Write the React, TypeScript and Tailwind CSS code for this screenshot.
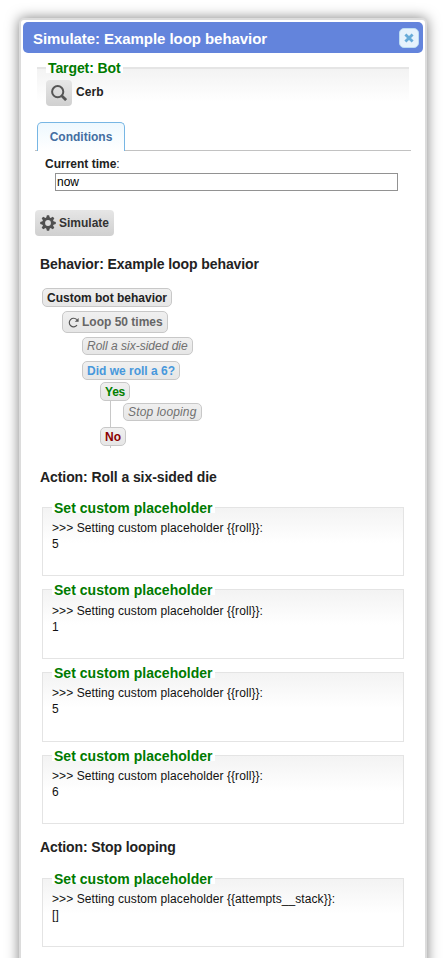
import React from "react";

type NodeProps = { className: string; children: React.ReactNode };

function TreeNode({ className, children }: NodeProps) {
  return (
    <div
      className={`flex w-fit items-center whitespace-nowrap rounded-[5px] border border-[#c8c8c8] bg-linear-to-b from-[#f0f0f0] to-[#e6e6e6] px-1 text-[12px] ${className}`}
    >
      {children}
    </div>
  );
}

type ResultProps = { className?: string; name: string; value: string };

function Result({ className = "", name, value }: ResultProps) {
  return (
    <section
      className={`ml-[21px] w-[362px] shrink-0 border border-[#e4e4e4] bg-linear-to-b from-[#f3f3f3] to-white to-[35px] pl-[9px] ${className}`}
    >
      <h3 className="-mt-[10px] flex h-[20px] w-[163px] items-center whitespace-nowrap bg-linear-to-b from-white from-75% to-transparent to-75% pl-[2px] text-[14px] font-bold tracking-[0.03px] text-[#007a00]">
        Set custom placeholder
      </h3>
      <p className="mt-[2px] whitespace-nowrap text-[12px] leading-[16px] tracking-[0.08px] text-[#111]">
        &gt;&gt;&gt; Setting custom placeholder {name}:
        <br />
        {value}
      </p>
    </section>
  );
}

function GearIcon() {
  return (
    <svg width="16" height="16" viewBox="0 0 16 16" className="shrink-0">
      <g fill="#505050">
        {[0, 45, 90, 135].map((a) => (
          <path key={a} d="M6.9.2h2.2l.9 3.3v9l-.9 3.3H6.9L6 12.5v-9z" transform={`rotate(${a} 8 8)`} />
        ))}
        <circle cx="8" cy="8" r="5.7" />
      </g>
      <circle cx="8" cy="8" r="2.9" fill="#dedede" />
    </svg>
  );
}

export default function App() {
  return (
    <div className="h-[958px] w-[444px] overflow-hidden bg-white pl-[19px] pt-[18px] font-['Liberation_Sans',Arial,sans-serif] text-[#222]">
      <main className="flex h-[980px] w-[408px] flex-col rounded-[5px] border-2 border-[#dcdcdc] bg-white shadow-[0_0_13px_rgba(0,0,0,0.5)]">
        <header className="mx-[2px] mt-[2px] flex h-[31px] shrink-0 items-center justify-between rounded-[5px] bg-[#6384dc] pl-[10px] pr-[4px]">
          <h1 className="mt-[3px] whitespace-nowrap text-[15px] font-bold tracking-[-0.06px] text-white">
            Simulate: Example loop behavior
          </h1>
          <button className="mt-px flex size-5 items-center justify-center rounded-[5px] border border-[#bcdcf2] bg-[#e6f2fc]">
            <svg width="10" height="10" viewBox="0 0 10 10">
              <path d="M1.4 1.4l7.2 7.2M8.6 1.4L1.4 8.6" stroke="#68abd8" strokeWidth="2.8" />
            </svg>
          </button>
        </header>

        <section className="ml-[16px] mt-[14px] h-[35px] w-[372px] shrink-0 border-t-2 border-[#e5e5e5] bg-linear-to-b from-[#f3f3f3] to-white pl-[9px]">
          <h2 className="-mt-[11px] flex h-[20px] w-[77px] items-center whitespace-nowrap bg-linear-to-b from-white from-75% to-transparent to-75% pl-[2px] text-[14px] font-bold tracking-[-0.1px] text-[#007a00]">
            Target: Bot
          </h2>
          <div className="mt-[2px] flex h-[26px] items-center gap-[5px]">
            <button className="-mr-px flex size-[26px] items-center justify-center rounded-[4px] bg-linear-to-b from-[#e6e6e6] to-[#d0d0d0]">
              <svg width="16" height="16" viewBox="0 0 16 16" fill="none" stroke="#555">
                <circle cx="6.7" cy="6.7" r="5.6" strokeWidth="2" />
                <path d="M10.7 10.7l4.4 4.4" strokeWidth="2.8" />
              </svg>
            </button>
            <b className="-mt-[3px] text-[12px] tracking-[0.05px]">Cerb</b>
          </div>
        </section>

        <nav className="ml-[14px] mt-[20px] flex h-[29px] w-[376px] shrink-0 border-b border-[#c2c2c2] pl-[2px]">
          <div className="flex h-[29px] w-[88px] items-center justify-center rounded-t-[5px] border border-b-0 border-[#77b6e4] bg-linear-to-b from-[#eef8fe] to-white text-[12px] font-bold text-[#436ea2]">
            Conditions
          </div>
        </nav>

        <label className="ml-[24px] mt-[6px] h-[16px] shrink-0 text-[12px] leading-[14px]">
          <b>Current time</b>:
        </label>
        <div className="ml-[34px] flex h-[18px] w-[343px] shrink-0 items-center border border-[#929292] pl-px text-[12px] text-black">
          now
        </div>

        <button className="ml-[14px] mt-[19px] flex h-[26px] w-[79px] shrink-0 items-center gap-[3px] rounded-[4px] bg-linear-to-b from-[#e6e6e6] to-[#d0d0d0] pl-[5px] text-[12px] font-bold text-[#333]">
          <GearIcon />
          Simulate
        </button>

        <h2 className="ml-[19px] mt-[20px] h-[16px] shrink-0 whitespace-nowrap text-[14px] font-bold leading-[16px] tracking-[-0.09px]">
          Behavior: Example loop behavior
        </h2>

        <div className="ml-[21px] mt-[16px] h-[160px] shrink-0">
          <TreeNode className="h-[19px] font-bold text-[#222]">Custom bot behavior</TreeNode>
          <div className="pl-[20px] pt-[4px]">
            <TreeNode className="h-[22px] font-bold text-[#666]">
              <svg width="11" height="11" viewBox="0 0 11 11" className="mr-[3px] ml-px" fill="none" stroke="#555">
                <path d="M9 8.2A4.3 4.3 0 1 1 8.8 2.7" strokeWidth="1.2" />
                <path d="M10.6 1v3.8H6.8z" fill="#555" stroke="none" />
              </svg>
              Loop 50 times
            </TreeNode>
            <div className="pl-[20px] pt-[4px]">
              <TreeNode className="h-[18px] italic text-[#707070]">Roll a six-sided die</TreeNode>
              <TreeNode className="mt-[6px] h-[19px] font-bold text-[#4798dc]">Did we roll a 6?</TreeNode>
              <div className="pl-[18px] pt-[2px]">
                <TreeNode className="h-[19px] font-bold tracking-[-0.2px] text-[#008000]">Yes</TreeNode>
                <div className="ml-[10px] h-[26px] border-l border-[#c8c8c8] pl-[12px] pt-[2px]">
                  <TreeNode className="h-[18px] italic tracking-[0.15px] text-[#707070]">Stop looping</TreeNode>
                </div>
                <TreeNode className="h-[19px] font-bold text-[#8b0000]">No</TreeNode>
                <div className="ml-[10px] h-[2px] border-l border-[#c8c8c8]" />
              </div>
            </div>
          </div>
        </div>

        <h2 className="ml-[19px] mt-[21px] h-[16px] shrink-0 whitespace-nowrap text-[14px] font-bold leading-[16px] tracking-[-0.08px]">
          Action: Roll a six-sided die
        </h2>
        <Result className="mt-[22px] h-[69px]" name="{{roll}}" value="5" />
        <Result className="mt-[13px] h-[70px] [&_p]:pt-px" name="{{roll}}" value="1" />
        <Result className="mt-[13px] h-[70px]" name="{{roll}}" value="5" />
        <Result className="mt-[13px] h-[69px]" name="{{roll}}" value="6" />

        <h2 className="ml-[19px] mt-[15px] h-[16px] shrink-0 whitespace-nowrap text-[14px] font-bold leading-[16px] tracking-[-0.1px]">
          Action: Stop looping
        </h2>
        <Result className="mt-[23px] h-[69px]" name="{{attempts__stack}}" value="[]" />
      </main>
    </div>
  );
}
